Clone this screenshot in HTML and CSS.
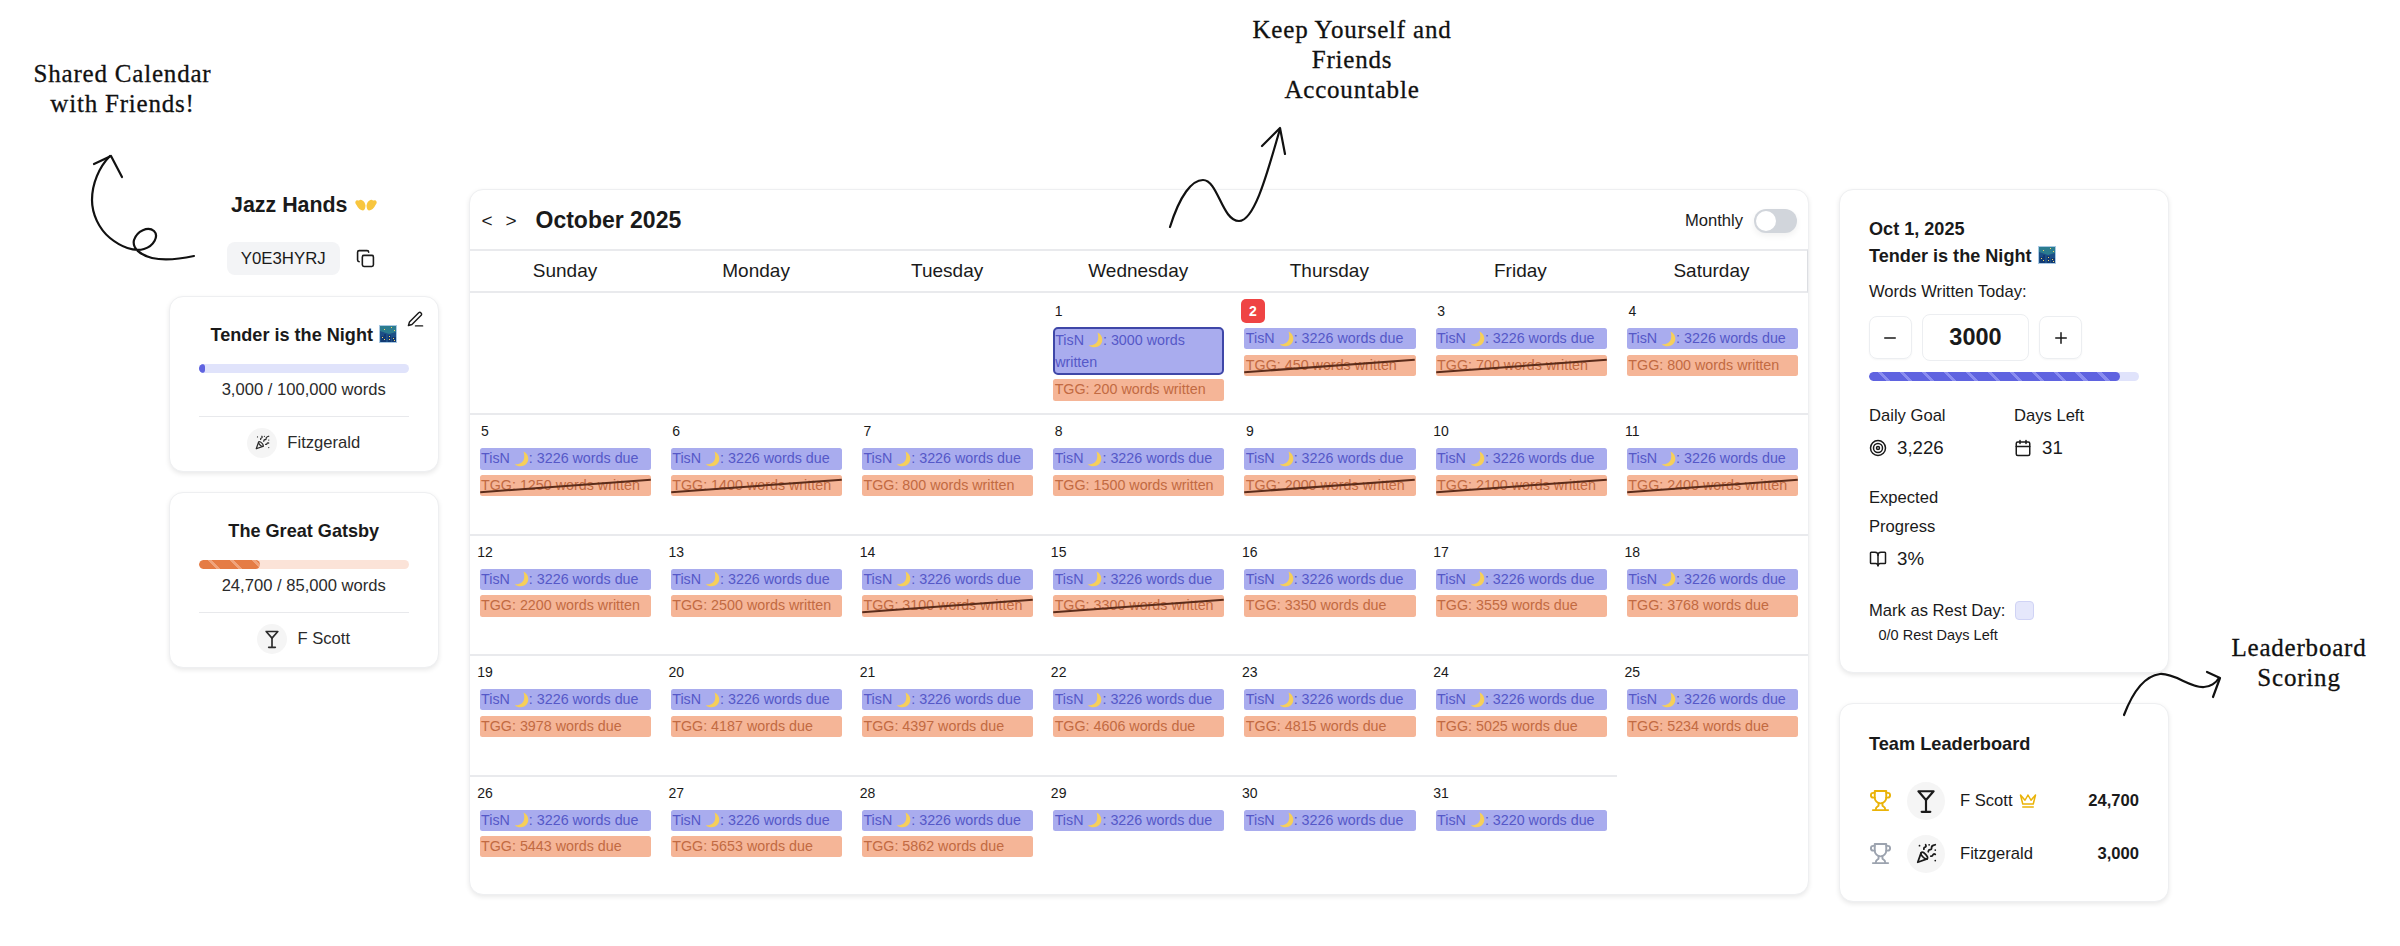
FILE: index.html
```html
<!DOCTYPE html>
<html>
<head>
    <meta charset="utf-8">
    <title>Shared Calendar</title>
    <link rel="stylesheet" href="styles.css">
</head>
<body>
    <!-- shared emoji and icons -->
    <svg class="defs" width="0" height="0">
        <symbol id="moon" viewBox="0 0 16 16"><path d="M9.5 0.500C14 2.500 15.800 8 13 12C10.200 16 4 16.300 0.800 13.200C5 13.600 8.800 11.800 9.900 8C10.500 5.500 10.300 3 9.500 0.500Z" fill="#f6cf5a"/></symbol>
        <symbol id="city" viewBox="0 0 18 18"><rect width="18" height="18" fill="#a9c9e4"/><rect x="1" y="1" width="16" height="16" fill="#1c4f86"/><path d="M1 1h16v6L10 9 1 6Z" fill="#2b7c8f"/><path d="M2 17v-6h3v-2h2v8Zm7 0v-7h3v7Zm4 0v-5h4v5Z" fill="#123a73"/><path d="M3 12h1v1H3Zm2 2h1v1H5Zm5-3h1v1h-1Zm0 3h1v1h-1Zm4-1h1v1h-1Zm1 2h1v1h-1ZM5 4h1v1H5Zm7-2h1v1h-1Zm3 3h1v1h-1Z" fill="#f2d76a"/></symbol>
        <symbol id="party" viewBox="0 0 24 24"><g fill="none" stroke="currentColor" stroke-width="2" stroke-linecap="round" stroke-linejoin="round"><path d="M5.800 11.300 2 22l10.700-3.790"/><path d="M4 3h.01M22 8h.01M15 2h.01M22 20h.01"/><path d="m22 2-2.240.75a2.900 2.900 0 0 0-1.960 3.120c.1.860-.57 1.630-1.450 1.630h-.38c-.86 0-1.600.6-1.760 1.440L14 10"/><path d="m22 13-.82-.33c-.86-.34-1.820.2-1.980 1.110c-.11.7-.72 1.220-1.430 1.220H17"/><path d="m11 2 .33.82c.34.86-.2 1.820-1.110 1.980C9.520 4.900 9 5.520 9 6.230V7"/><path d="M11 13c1.930 1.930 2.830 4.170 2 5-.83.83-3.070-.07-5-2-1.930-1.930-2.830-4.170-2-5 .83-.83 3.070.07 5 2Z"/></g></symbol>
        <symbol id="martini" viewBox="0 0 24 24"><g fill="none" stroke="currentColor" stroke-width="2" stroke-linecap="round" stroke-linejoin="round"><path d="M8 22h8M12 11v11"/><path d="m19 3-7 8-7-8Z"/></g></symbol>
        <symbol id="trophy" viewBox="0 0 24 24"><g fill="none" stroke="currentColor" stroke-width="2" stroke-linecap="round" stroke-linejoin="round"><path d="M6 9H4.500a2.500 2.500 0 0 1 0-5H6"/><path d="M18 9h1.500a2.500 2.500 0 0 0 0-5H18"/><path d="M4 22h16"/><path d="M10 14.660V17c0 .55-.47.98-.97 1.210C7.850 18.750 7 20.240 7 22"/><path d="M14 14.660V17c0 .55.47.98.97 1.210C16.150 18.750 17 20.240 17 22"/><path d="M18 2H6v7a6 6 0 0 0 12 0V2Z"/></g></symbol>
    </svg>

    <div class="page">
        <!-- left column: team and books -->
        <aside class="team">
            <h2 class="team-name">Jazz Hands
                <svg class="hands" viewBox="0 0 22 12"><path d="M0.500 2.500C1.500 0.500 3 1.500 4 1.500C5 0.200 6.500 0.500 7.500 1.500C9 2 10 4 10.500 6.500C10.500 9 9.500 11.500 8 11.500C5.500 11.500 3 9 1.500 6C0.500 4.800 0 3.500 0.500 2.500ZM21.500 2.500C20.500 0.500 19 1.500 18 1.500C17 0.200 15.500 0.500 14.500 1.500C13 2 12 4 11.500 6.500C11.500 9 12.500 11.500 14 11.500C16.500 11.500 19 9 20.500 6C21.500 4.800 22 3.500 21.500 2.500Z" fill="#f8c63f"/></svg>
            </h2>
            <div class="team-code">
                <span class="code-pill">Y0E3HYRJ</span>
                <svg class="copy-icon" viewBox="0 0 24 24"><rect x="8" y="8" width="14" height="14" rx="2"/><path d="M4 16c-1.100 0-2-.9-2-2V4c0-1.100.9-2 2-2h10c1.100 0 2 .9 2 2"/></svg>
            </div>

            <div class="card book">
                <svg class="edit-icon" viewBox="0 0 24 24"><path d="M12 21h10"/><path d="M16.500 2.500a2.500 2.500 0 0 1 3.500 3.500L7 19l-5 1.500 1.500-5Z"/></svg>
                <h3 class="book-title">Tender is the Night <svg class="city"><use href="#city"/></svg></h3>
                <div class="bar bar-blue"><div class="fill fill-dot"></div></div>
                <p class="book-count">3,000 / 100,000 words</p>
                <div class="book-owner">
                    <span class="avatar"><svg class="party"><use href="#party"/></svg></span>
                    <span>Fitzgerald</span>
                </div>
            </div>

            <div class="card book">
                <h3 class="book-title">The Great Gatsby</h3>
                <div class="bar bar-orange"><div class="fill fill-gatsby"></div></div>
                <p class="book-count">24,700 / 85,000 words</p>
                <div class="book-owner">
                    <span class="avatar"><svg class="martini"><use href="#martini"/></svg></span>
                    <span>F Scott</span>
                </div>
            </div>
        </aside>

        <!-- calendar -->
        <main class="card calendar">
            <header class="cal-head">
                <span class="cal-nav">&lt;</span>
                <span class="cal-nav">&gt;</span>
                <h1 class="cal-title">October 2025</h1>
                <span class="cal-mode">Monthly</span>
                <span class="toggle"><span class="knob"></span></span>
            </header>
            <div class="weekdays">
                <div>Sunday</div><div>Monday</div><div>Tuesday</div><div>Wednesday</div><div>Thursday</div><div>Friday</div><div>Saturday</div>
            </div>
            <div class="cal-grid">
                <div class="day first"></div>
                <div class="day first"></div>
                <div class="day first"></div>
                <div class="day first"><div class="num">1</div>
                    <div class="event tisn active">TisN <svg class="moon"><use href="#moon"/></svg>: 3000 words<br>written</div>
                    <div class="event tgg">TGG: 200 words written</div></div>
                <div class="day first"><div class="num today">2</div>
                    <div class="event tisn">TisN <svg class="moon"><use href="#moon"/></svg>: 3226 words due</div>
                    <div class="event tgg done">TGG: 450 words written</div></div>
                <div class="day first"><div class="num">3</div>
                    <div class="event tisn">TisN <svg class="moon"><use href="#moon"/></svg>: 3226 words due</div>
                    <div class="event tgg done">TGG: 700 words written</div></div>
                <div class="day first"><div class="num">4</div>
                    <div class="event tisn">TisN <svg class="moon"><use href="#moon"/></svg>: 3226 words due</div>
                    <div class="event tgg">TGG: 800 words written</div></div>

                <div class="day"><div class="num">5</div>
                    <div class="event tisn">TisN <svg class="moon"><use href="#moon"/></svg>: 3226 words due</div>
                    <div class="event tgg done">TGG: 1250 words written</div></div>
                <div class="day"><div class="num">6</div>
                    <div class="event tisn">TisN <svg class="moon"><use href="#moon"/></svg>: 3226 words due</div>
                    <div class="event tgg done">TGG: 1400 words written</div></div>
                <div class="day"><div class="num">7</div>
                    <div class="event tisn">TisN <svg class="moon"><use href="#moon"/></svg>: 3226 words due</div>
                    <div class="event tgg">TGG: 800 words written</div></div>
                <div class="day"><div class="num">8</div>
                    <div class="event tisn">TisN <svg class="moon"><use href="#moon"/></svg>: 3226 words due</div>
                    <div class="event tgg">TGG: 1500 words written</div></div>
                <div class="day"><div class="num">9</div>
                    <div class="event tisn">TisN <svg class="moon"><use href="#moon"/></svg>: 3226 words due</div>
                    <div class="event tgg done">TGG: 2000 words written</div></div>
                <div class="day"><div class="num">10</div>
                    <div class="event tisn">TisN <svg class="moon"><use href="#moon"/></svg>: 3226 words due</div>
                    <div class="event tgg done">TGG: 2100 words written</div></div>
                <div class="day"><div class="num">11</div>
                    <div class="event tisn">TisN <svg class="moon"><use href="#moon"/></svg>: 3226 words due</div>
                    <div class="event tgg done">TGG: 2400 words written</div></div>

                <div class="day"><div class="num">12</div>
                    <div class="event tisn">TisN <svg class="moon"><use href="#moon"/></svg>: 3226 words due</div>
                    <div class="event tgg">TGG: 2200 words written</div></div>
                <div class="day"><div class="num">13</div>
                    <div class="event tisn">TisN <svg class="moon"><use href="#moon"/></svg>: 3226 words due</div>
                    <div class="event tgg">TGG: 2500 words written</div></div>
                <div class="day"><div class="num">14</div>
                    <div class="event tisn">TisN <svg class="moon"><use href="#moon"/></svg>: 3226 words due</div>
                    <div class="event tgg done">TGG: 3100 words written</div></div>
                <div class="day"><div class="num">15</div>
                    <div class="event tisn">TisN <svg class="moon"><use href="#moon"/></svg>: 3226 words due</div>
                    <div class="event tgg done">TGG: 3300 words written</div></div>
                <div class="day"><div class="num">16</div>
                    <div class="event tisn">TisN <svg class="moon"><use href="#moon"/></svg>: 3226 words due</div>
                    <div class="event tgg">TGG: 3350 words due</div></div>
                <div class="day"><div class="num">17</div>
                    <div class="event tisn">TisN <svg class="moon"><use href="#moon"/></svg>: 3226 words due</div>
                    <div class="event tgg">TGG: 3559 words due</div></div>
                <div class="day"><div class="num">18</div>
                    <div class="event tisn">TisN <svg class="moon"><use href="#moon"/></svg>: 3226 words due</div>
                    <div class="event tgg">TGG: 3768 words due</div></div>

                <div class="day"><div class="num">19</div>
                    <div class="event tisn">TisN <svg class="moon"><use href="#moon"/></svg>: 3226 words due</div>
                    <div class="event tgg">TGG: 3978 words due</div></div>
                <div class="day"><div class="num">20</div>
                    <div class="event tisn">TisN <svg class="moon"><use href="#moon"/></svg>: 3226 words due</div>
                    <div class="event tgg">TGG: 4187 words due</div></div>
                <div class="day"><div class="num">21</div>
                    <div class="event tisn">TisN <svg class="moon"><use href="#moon"/></svg>: 3226 words due</div>
                    <div class="event tgg">TGG: 4397 words due</div></div>
                <div class="day"><div class="num">22</div>
                    <div class="event tisn">TisN <svg class="moon"><use href="#moon"/></svg>: 3226 words due</div>
                    <div class="event tgg">TGG: 4606 words due</div></div>
                <div class="day"><div class="num">23</div>
                    <div class="event tisn">TisN <svg class="moon"><use href="#moon"/></svg>: 3226 words due</div>
                    <div class="event tgg">TGG: 4815 words due</div></div>
                <div class="day"><div class="num">24</div>
                    <div class="event tisn">TisN <svg class="moon"><use href="#moon"/></svg>: 3226 words due</div>
                    <div class="event tgg">TGG: 5025 words due</div></div>
                <div class="day"><div class="num">25</div>
                    <div class="event tisn">TisN <svg class="moon"><use href="#moon"/></svg>: 3226 words due</div>
                    <div class="event tgg">TGG: 5234 words due</div></div>

                <div class="day"><div class="num">26</div>
                    <div class="event tisn">TisN <svg class="moon"><use href="#moon"/></svg>: 3226 words due</div>
                    <div class="event tgg">TGG: 5443 words due</div></div>
                <div class="day"><div class="num">27</div>
                    <div class="event tisn">TisN <svg class="moon"><use href="#moon"/></svg>: 3226 words due</div>
                    <div class="event tgg">TGG: 5653 words due</div></div>
                <div class="day"><div class="num">28</div>
                    <div class="event tisn">TisN <svg class="moon"><use href="#moon"/></svg>: 3226 words due</div>
                    <div class="event tgg">TGG: 5862 words due</div></div>
                <div class="day"><div class="num">29</div>
                    <div class="event tisn">TisN <svg class="moon"><use href="#moon"/></svg>: 3226 words due</div></div>
                <div class="day"><div class="num">30</div>
                    <div class="event tisn">TisN <svg class="moon"><use href="#moon"/></svg>: 3226 words due</div></div>
                <div class="day"><div class="num">31</div>
                    <div class="event tisn">TisN <svg class="moon"><use href="#moon"/></svg>: 3220 words due</div></div>
            </div>
        </main>

        <!-- right column: day detail and leaderboard -->
        <aside class="side">
            <div class="card detail">
                <h3 class="detail-title">Oct 1, 2025<br>Tender is the Night <svg class="city"><use href="#city"/></svg></h3>
                <p class="detail-label">Words Written Today:</p>
                <div class="stepper">
                    <span class="step">
                        <svg viewBox="0 0 24 24"><path d="M5 12h14"/></svg>
                    </span>
                    <span class="step-value">3000</span>
                    <span class="step">
                        <svg viewBox="0 0 24 24"><path d="M5 12h14M12 5v14"/></svg>
                    </span>
                </div>
                <div class="bar bar-blue"><div class="fill fill-today"></div></div>
                <div class="stats">
                    <div>
                        <div class="stat-label">Daily Goal</div>
                        <div class="stat-value">
                            <svg class="stat-icon" viewBox="0 0 24 24"><circle cx="12" cy="12" r="10"/><circle cx="12" cy="12" r="6"/><circle cx="12" cy="12" r="2"/></svg>
                            3,226
                        </div>
                    </div>
                    <div>
                        <div class="stat-label">Days Left</div>
                        <div class="stat-value">
                            <svg class="stat-icon" viewBox="0 0 24 24"><path d="M8 2v4M16 2v4M3 10h18"/><rect x="3" y="4" width="18" height="18" rx="2"/></svg>
                            31
                        </div>
                    </div>
                    <div>
                        <div class="stat-label">Expected Progress</div>
                        <div class="stat-value">
                            <svg class="stat-icon" viewBox="0 0 24 24"><path d="M12 7v14"/><path d="M3 18a1 1 0 0 1-1-1V4a1 1 0 0 1 1-1h5a4 4 0 0 1 4 4 4 4 0 0 1 4-4h5a1 1 0 0 1 1 1v13a1 1 0 0 1-1 1h-6a3 3 0 0 0-3 3 3 3 0 0 0-3-3z"/></svg>
                            3%
                        </div>
                    </div>
                </div>
                <div class="rest-row">Mark as Rest Day: <span class="rest-box"></span></div>
                <p class="rest-left">0/0 Rest Days Left</p>
            </div>

            <div class="card leaders">
                <h3 class="leaders-title">Team Leaderboard</h3>
                <div class="leader">
                    <svg class="trophy gold"><use href="#trophy"/></svg>
                    <span class="avatar avatar-lg"><svg class="martini-lg"><use href="#martini"/></svg></span>
                    <span class="leader-name">F Scott</span>
                    <svg class="crown" viewBox="0 0 24 24"><path d="m2 4 3 12h14l3-12-6 7-4-7-4 7-6-7zm3 16h14"/></svg>
                    <b class="score">24,700</b>
                </div>
                <div class="leader">
                    <svg class="trophy silver"><use href="#trophy"/></svg>
                    <span class="avatar avatar-lg"><svg class="party-lg"><use href="#party"/></svg></span>
                    <span class="leader-name">Fitzgerald</span>
                    <b class="score">3,000</b>
                </div>
            </div>
        </aside>

        <!-- hand-drawn notes over the app -->
        <div class="note note-shared">Shared Calendar<br>with Friends!</div>
        <div class="note note-keep">Keep Yourself and<br>Friends<br>Accountable</div>
        <div class="note note-score">Leaderboard<br>Scoring</div>
        <svg class="sketch" width="2400" height="946" viewBox="0 0 2400 946">
            <path d="M194 256C180 259 165 261 152 258C140 255 132 248 134 240C137 231 148 226 154 231C159 236 154 246 144 249C134 252 121 247 110 238C99 229 92 214 92 200C92 184 99 167 110 156"/>
            <path d="M94 164L111 156L122 177"/>
            <path d="M1170 227C1180 195 1192 180 1203 180C1218 180 1222 221 1239 221C1255 221 1268 170 1280 129"/>
            <path d="M1262 146L1280 128L1285 154"/>
            <path d="M2124 715C2132 694 2144 676 2160 674C2175 673 2190 688 2204 687C2210 687 2216 683 2219 678"/>
            <path d="M2207 672L2220 678L2213 697"/>
        </svg>
    </div>
</body>
</html>
```

FILE: styles.css
```css
* {
    box-sizing: border-box;
}
body {
    margin: 0;
    background: #fff;
    color: #1a1a1a;
    font-family: "Liberation Sans", Arial, sans-serif;
    font-size: 16.6px;
}
h1, h2, h3, p {
    margin: 0;
}
.defs {
    position: absolute;
}
.page {
    position: relative;
    display: flex;
    align-items: flex-start;
    gap: 30px;
    height: 946px;
    padding: 189px 0 0 169px;
    overflow: hidden;
}
.card {
    position: relative;
    background: #fff;
    border: 1px solid #eeeff1;
    border-radius: 14px;
    box-shadow: 0 2px 5px rgba(0, 0, 0, 0.09);
}
.avatar {
    display: flex;
    align-items: center;
    justify-content: center;
    width: 30px;
    height: 30px;
    border-radius: 50%;
    background: #f5f5f5;
}

/* left column */
.team {
    width: 269.500px;
    flex: none;
}
.team-name {
    display: flex;
    align-items: center;
    justify-content: center;
    gap: 7px;
    height: 32px;
    font-size: 21.4px;
}
.hands {
    width: 22px;
    height: 12px;
}
.team-code {
    display: flex;
    align-items: center;
    justify-content: center;
    gap: 16px;
    margin: 21px 6px 20.500px 0;
}
.code-pill {
    width: 113px;
    height: 33px;
    line-height: 33px;
    text-align: center;
    background: #f3f4f6;
    border-radius: 8px;
    font-size: 16.8px;
}
.copy-icon, .edit-icon, .step svg, .stat-icon, .crown {
    fill: none;
    stroke: currentColor;
    stroke-width: 2;
    stroke-linecap: round;
    stroke-linejoin: round;
}
.copy-icon {
    width: 19px;
    height: 19px;
}
.book {
    height: 176px;
    padding: 26.500px 28.500px 0;
    margin-bottom: 20px;
}
.edit-icon {
    position: absolute;
    top: 14px;
    right: 14px;
    width: 17px;
    height: 17px;
}
.book-title {
    height: 24px;
    line-height: 24px;
    text-align: center;
    font-size: 18.100px;
}
.city {
    width: 18px;
    height: 18px;
    margin-left: 1px;
    vertical-align: -2px;
}
.book .bar {
    margin-top: 16.500px;
}
.book-count {
    margin-top: 5px;
    line-height: 24px;
    text-align: center;
    color: #2b2b2b;
}
.book-owner {
    display: flex;
    align-items: center;
    justify-content: center;
    gap: 10px;
    margin-top: 14px;
    padding-top: 10.500px;
    border-top: 1px solid #e8e9ec;
    color: #2b2b2b;
}
.party {
    width: 15px;
    height: 15px;
}
.martini {
    width: 20px;
    height: 24px;
}

/* progress bars */
.bar {
    height: 9.500px;
    border-radius: 5px;
    overflow: hidden;
}
.bar-blue {
    background: #e0e3fb;
}
.bar-orange {
    background: #fbe3d8;
}
.fill {
    height: 100%;
    border-radius: 5px;
}
.fill-dot {
    width: 6px;
    background: #5f63e0;
}
.fill-gatsby {
    width: 29%;
    background: repeating-linear-gradient(45deg, #e57c45 0, #e57c45 12.500px, #f0a47c 12.500px, #f0a47c 15.500px);
}
.fill-today {
    width: 93%;
    background: repeating-linear-gradient(45deg, #5f63e0 0, #5f63e0 12.500px, #8a8df0 12.500px, #8a8df0 15.500px);
}

/* calendar */
.calendar {
    width: 1340.500px;
    height: 706px;
    flex: none;
    overflow: hidden;
}
.cal-head {
    display: flex;
    align-items: center;
    height: 59px;
    padding: 2px 11px 0 12px;
}
.cal-nav {
    width: 24px;
    font-size: 19px;
}
.cal-title {
    margin-left: 6px;
    font-size: 23px;
}
.cal-mode {
    margin-left: auto;
}
.toggle {
    display: flex;
    align-items: center;
    width: 43px;
    height: 24px;
    margin-left: 11px;
    padding: 0 2px;
    border-radius: 12px;
    background: #d1d5db;
    box-shadow: 0 3px 6px rgba(0, 0, 0, 0.06);
}
.knob {
    width: 20px;
    height: 20px;
    border-radius: 50%;
    background: #fff;
}
.weekdays {
    display: grid;
    grid-template-columns: repeat(7, 1fr);
    height: 44px;
    line-height: 39px;
    text-align: center;
    font-size: 19px;
    border-top: 2px solid #e9eaed;
    border-bottom: 2px solid #e9eaed;
    border-right: 1px solid #dcdee2;
}
.cal-grid {
    display: grid;
    grid-template-columns: repeat(7, 1fr);
    grid-auto-rows: 120.400px;
}
.day {
    padding: 0 10px;
    border-top: 2px solid #e9eaed;
}
.day.first {
    border-top: 0;
    padding-top: 2px;
}
.num {
    width: 20px;
    height: 24px;
    margin: 4px 0 5px -4.500px;
    line-height: 24px;
    text-align: center;
    font-size: 14px;
}
.num.today {
    width: 24px;
    margin-left: -3.500px;
    border-radius: 5px;
    background: #ef4444;
    color: #fff;
    font-weight: bold;
}
.event {
    position: relative;
    min-height: 21.300px;
    margin-bottom: 5.300px;
    padding-left: 1.500px;
    line-height: 21.300px;
    font-size: 14.300px;
    border-radius: 2.500px;
}
.tisn {
    background: #a9acee;
    color: #5558c8;
}
.tgg {
    background: #f5b597;
    color: #c26a42;
}
.event.active {
    margin-top: -1.300px;
    padding-left: 0;
    margin-bottom: 4.700px;
    line-height: 22px;
    border: 2px solid #3f47a8;
    border-radius: 5px;
}
/* the struck-through pen line on days that are done */
.event.done::after {
    content: "";
    position: absolute;
    left: 0;
    right: 0;
    top: 10px;
    height: 2px;
    background: #5b2c1a;
    transform: rotate(-4.200deg);
}
.moon {
    width: 16px;
    height: 16px;
    margin-right: -1px;
    vertical-align: -3.500px;
}

/* right column */
.side {
    width: 330px;
    flex: none;
}
.detail {
    height: 484px;
    padding: 26px 29.500px 0 29px;
}
.detail-title {
    line-height: 26.500px;
    font-size: 18.100px;
}
.detail-label {
    margin-top: 10.500px;
    line-height: 24px;
}
.stepper {
    display: flex;
    align-items: center;
    gap: 10.600px;
    margin-top: 10.500px;
}
.step {
    display: flex;
    align-items: center;
    justify-content: center;
    width: 42.700px;
    height: 42.700px;
    border: 1px solid #eceef1;
    border-radius: 8px;
    box-shadow: 0 1px 2px rgba(0, 0, 0, 0.04);
}
.step svg {
    width: 18px;
    height: 18px;
}
.step-value {
    width: 106.400px;
    height: 47.400px;
    line-height: 45px;
    text-align: center;
    font-size: 23.500px;
    font-weight: bold;
    border: 1px solid #eceef1;
    border-radius: 8px;
}
.detail .bar {
    margin-top: 10.300px;
}
.stats {
    display: grid;
    grid-template-columns: 121px 121px;
    column-gap: 24px;
    row-gap: 22.500px;
    margin-top: 20px;
}
.stat-label {
    line-height: 29px;
}
.stat-value {
    display: flex;
    align-items: center;
    gap: 10px;
    height: 24px;
    margin-top: 6px;
    font-size: 18.700px;
}
.stat-icon {
    width: 18px;
    height: 18px;
    flex: none;
}
.rest-row {
    display: flex;
    align-items: center;
    gap: 10px;
    height: 24px;
    margin-top: 28px;
}
.rest-box {
    width: 18.500px;
    height: 18.500px;
    background: #e5e7fb;
    border: 1px solid #d0d3f5;
    border-radius: 4px;
}
.rest-left {
    margin: 2px 0 0 9.500px;
    line-height: 20px;
    font-size: 14.500px;
}
.leaders {
    height: 199px;
    margin-top: 30px;
    padding: 27.500px 29px 0;
}
.leaders-title {
    line-height: 24px;
    font-size: 18.200px;
}
.leader {
    display: flex;
    align-items: center;
    height: 40px;
    margin-bottom: 13.400px;
}
.leaders-title + .leader {
    margin-top: 25px;
}
.trophy {
    width: 23px;
    height: 23px;
    margin-right: 15px;
}
.gold {
    color: #eab308;
}
.silver {
    color: #9ca3af;
}
.avatar-lg {
    width: 38px;
    height: 38px;
    margin-right: 15px;
}
.martini-lg {
    width: 26px;
    height: 28px;
}
.party-lg {
    width: 21px;
    height: 21px;
}
.crown {
    width: 18px;
    height: 18px;
    margin-left: 6px;
    color: #eab308;
}
.score {
    margin-left: auto;
}

/* annotations */
.note {
    position: absolute;
    text-align: center;
    font-family: "Liberation Serif", "Times New Roman", serif;
    font-size: 25px;
    letter-spacing: 0.800px;
    color: #111;
    -webkit-text-stroke: 0.300px #111;
}
.note-shared {
    left: 0;
    top: 59px;
    width: 245px;
    line-height: 29.500px;
}
.note-keep {
    left: 1202px;
    top: 15px;
    width: 300px;
    line-height: 30px;
}
.note-score {
    left: 2199px;
    top: 633px;
    width: 200px;
    line-height: 30px;
}
.sketch {
    position: absolute;
    left: 0;
    top: 0;
    pointer-events: none;
    fill: none;
    stroke: #111;
    stroke-width: 2.200;
    stroke-linecap: round;
    stroke-linejoin: round;
}
```
